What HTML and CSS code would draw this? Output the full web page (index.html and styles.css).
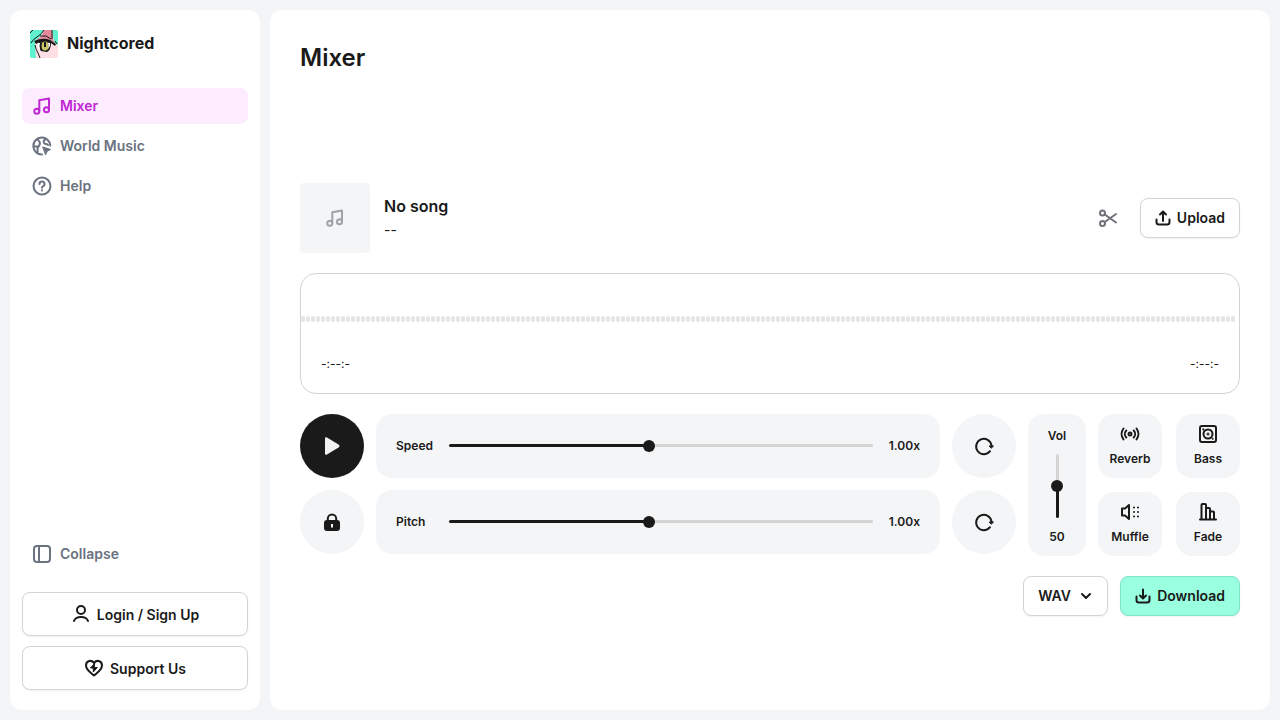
FILE: index.html
```
<!DOCTYPE html>
<html lang="en">
<head>
<meta charset="UTF-8">
<meta name="viewport" content="width=device-width, initial-scale=1.0">
<title>Nightcored</title>
<link rel="stylesheet" href="styles.css">
</head>
<body>
<div class="app">
    <aside class="sidebar">
        <a class="brand" href="#">
            <svg class="brand-logo" viewBox="0 0 28 28" aria-hidden="true">
                <rect width="28" height="28" fill="#ffdfe3"/>
                <path d="M0 0h14L10 7 5 11l1 17H0z" fill="#5ff0cf"/>
                <path d="M14 0h8l1 9 2 4-12-4-7 1 6-4z" fill="#e2899a"/>
                <path d="M22 0h6v15l-4-3z" fill="#5ff0cf"/>
                <path d="M0 3l3-3M14 0q-2 4-7 7-4 2-6 6M10 6l6 0 5 3M22 0v9M5 15q1 5 3 8l2 5M25 11l2 3" fill="none" stroke="#171717" stroke-width="1"/>
                <path d="M4 11q9-4 16-1l6 4-1 2-4-3-11-1-4 2z" fill="#171717"/>
                <path d="M9 12q-1 5 2 9l6 1q4-2 4-9z" fill="#171717"/>
                <path d="M8 13q-1 4 1 6l1 1q-1-4 0-7z" fill="#fff"/>
                <ellipse cx="15" cy="16" rx="3.500" ry="4.500" fill="#c9c568"/>
                <path d="M14 12h2v5h-2z" fill="#171717"/>
                <path d="M18 13q1 3 0 6l2-3v-3z" fill="#fff"/>
            </svg>
            <span class="brand-name">Nightcored</span>
        </a>
        <nav class="menu">
            <a class="menu-item active" href="#">
                <svg class="icon" viewBox="0 0 20 20"><circle cx="4.800" cy="15.200" r="2.500"/><circle cx="14.500" cy="13.800" r="2.500"/><path d="M7.300 15V4.200L17 2.500v11.300"/></svg>
                Mixer
            </a>
            <a class="menu-item" href="#">
                <svg class="icon" viewBox="0 0 20 20"><path d="M18.300 9.500A8.500 8.500 0 1 0 10 18.500"/><path d="M5.500 3.500C8 5.500 8.500 7 7.500 9s-2 2-2 3.500.5 3 0 4M2 10.500h3M14 3c-2 1-3 2.500-2 4s3 .5 4 2"/><path class="solid" d="M11 11l7.500 2.500-3.300 1.700-1.500 3.300z"/></svg>
                World Music
            </a>
            <a class="menu-item" href="#">
                <svg class="icon" viewBox="0 0 20 20"><circle cx="10" cy="10" r="8.500"/><path d="M7.500 8a2.500 2.500 0 1 1 3.700 2.200q-1.200.6-1.200 1.600M10 14.300v.1"/></svg>
                Help
            </a>
        </nav>
        <div class="sidebar-bottom">
            <button class="menu-item" type="button">
                <svg class="icon" viewBox="0 0 20 20"><rect x="2" y="2" width="16" height="16" rx="3"/><path d="M7 2v16"/></svg>
                Collapse
            </button>
            <button class="btn btn-large" type="button">
                <svg class="icon" viewBox="0 0 20 20"><circle cx="10" cy="6" r="4"/><path d="M3 17c1-3 4-4 7-4s6 1 7 4"/></svg>
                Login / Sign Up
            </button>
            <button class="btn btn-large" type="button">
                <svg class="icon" viewBox="0 0 20 20"><path d="M10 17.500C7 15 2 12 2 7.500 2 2.500 8 1.500 10 5c2-3.500 8-2.500 8 2.500 0 4.500-5 7.500-8 10z"/><path class="solid" d="M10.500 5.500l-4 4.500h2.800v4l4-4.500h-2.800z"/></svg>
                Support Us
            </button>
        </div>
    </aside>

    <main class="main">
        <h1>Mixer</h1>
        <div class="mixer">
            <section class="song">
                <div class="cover">
                    <svg class="icon" viewBox="0 0 20 20"><circle cx="4.800" cy="15.200" r="2.500"/><circle cx="14.500" cy="13.800" r="2.500"/><path d="M7.300 15V4.200L17 2.500v11.300"/></svg>
                </div>
                <div class="song-info">
                    <h2>No song</h2>
                    <p>--</p>
                </div>
                <button class="trim" type="button" aria-label="Trim">
                    <svg class="icon" viewBox="0 0 20 20"><circle cx="4.500" cy="5" r="2.500"/><circle cx="4.500" cy="15.500" r="2.500"/><path d="M6.800 6.500L18 14.500M6.800 14L18 6"/></svg>
                </button>
                <button class="btn" type="button">
                    <svg class="icon small" viewBox="0 0 16 16"><path d="M1.500 9.500V12q0 2.500 2.500 2.500h8q2.500 0 2.500-2.500V9.500M8 11V2M5 4.500L8 1.500l3 3"/></svg>
                    Upload
                </button>
            </section>

            <section class="wave">
                <svg class="wave-bars" width="100%" height="70" aria-hidden="true">
                    <defs>
                        <pattern id="bars" width="5" height="70" patternUnits="userSpaceOnUse">
                            <rect x="0" y="32" width="4" height="6" rx="2"/>
                        </pattern>
                    </defs>
                    <rect width="100%" height="70" fill="url(#bars)"/>
                </svg>
                <div class="times"><span>-:--:-</span><span>-:--:-</span></div>
            </section>

            <section class="controls">
                <div class="rows">
                    <button class="round play" type="button" aria-label="Play">
                        <svg viewBox="0 0 20 20" width="20" height="20"><path d="M3 2.500q0-2 2-1L16.500 8.500q2 1.500 0 3L5 18.500q-2 1-2-1z" fill="#f1f1f1"/></svg>
                    </button>
                    <div class="panel">
                        <label for="speed">Speed</label>
                        <input class="slider" id="speed" type="range" min="0.5" max="1.56" step="0.01" value="1">
                        <output for="speed">1.00x</output>
                    </div>
                    <button class="round" type="button" aria-label="Reset speed">
                        <svg class="icon" viewBox="0 0 20 20"><path d="M16 15.200A7.700 7.700 0 1 1 17.500 9.500"/><path class="solid" d="M15.500 10h4l-2 2z"/></svg>
                    </button>
                    <button class="round" type="button" aria-label="Lock pitch">
                        <svg viewBox="0 0 20 20" width="20" height="20"><path d="M5.800 9V6.800a4.200 4.200 0 0 1 8.400 0V9" fill="none" stroke="#1a1a1a" stroke-width="2"/><path d="M5 8h10q3 0 3 3v5q0 3-3 3H5q-3 0-3-3v-5q0-3 3-3zM9 12v3.500h2V12z" fill="#1a1a1a" fill-rule="evenodd"/></svg>
                    </button>
                    <div class="panel">
                        <label for="pitch">Pitch</label>
                        <input class="slider" id="pitch" type="range" min="0.5" max="1.56" step="0.01" value="1">
                        <output for="pitch">1.00x</output>
                    </div>
                    <button class="round" type="button" aria-label="Reset pitch">
                        <svg class="icon" viewBox="0 0 20 20"><path d="M16 15.200A7.700 7.700 0 1 1 17.500 9.500"/><path class="solid" d="M15.500 10h4l-2 2z"/></svg>
                    </button>
                </div>
                <div class="volume">
                    <label for="vol">Vol</label>
                    <input class="slider vertical" id="vol" type="range" min="0" max="100" value="50">
                    <output for="vol">50</output>
                </div>
                <div class="effects">
                    <button class="effect" type="button">
                        <svg class="icon" viewBox="0 0 20 20"><circle cx="10" cy="10" r="1.500"/><path d="M6.300 6.500a5 5 0 0 0 0 7M13.700 6.500a5 5 0 0 1 0 7M3.500 4.500a9 9 0 0 0 0 11M16.500 4.500a9 9 0 0 1 0 11"/></svg>
                        Reverb
                    </button>
                    <button class="effect" type="button">
                        <svg class="icon" viewBox="0 0 20 20"><rect x="2" y="2" width="16" height="16" rx="2"/><circle cx="10" cy="10" r="4.500"/><circle cx="10" cy="10" r=".5"/><path d="M5.300 5.300v.1M14.700 14.700v.1"/></svg>
                        Bass
                    </button>
                    <button class="effect" type="button">
                        <svg class="icon" viewBox="0 0 20 20"><path d="M2 6.500h3L9 3v14l-4-3.500H2z"/><path class="dots" d="M14 5.500v.1M14 10v.1M14 14.500v.1M18 5.500v.1M18 10v.1M18 14.500v.1"/></svg>
                        Muffle
                    </button>
                    <button class="effect" type="button">
                        <svg class="icon" viewBox="0 0 20 20"><path d="M2 17.500h16M3.500 17V3q0-1 1-1H7q1 0 1 1v14M8 6h3q1 0 1 1v10M12 9.500h3q1 0 1 1V17"/></svg>
                        Fade
                    </button>
                </div>
            </section>

            <section class="export">
                <div class="format">
                    <select class="btn" aria-label="Format">
                        <option>WAV</option>
                        <option>MP3</option>
                    </select>
                    <svg class="icon chevron" viewBox="0 0 12 12"><path d="M2 4l4 4 4-4"/></svg>
                </div>
                <button class="btn download" type="button">
                    <svg class="icon small" viewBox="0 0 16 16"><path d="M1.500 8.500V12q0 2.500 2.500 2.500h8q2.500 0 2.500-2.500V8.500M8 1.500V10M5 7.500l3 3 3-3"/></svg>
                    Download
                </button>
            </section>
        </div>
    </main>
</div>
<script>
    document.querySelectorAll('.slider').forEach(function (slider) {
        function update() {
            const percent = (slider.value - slider.min) / (slider.max - slider.min) * 100
            slider.style.setProperty('--fill', percent + '%')
            slider.nextElementSibling.textContent = slider.id === 'vol' ? slider.value : Number(slider.value).toFixed(2) + 'x'
        }
        slider.addEventListener('input', update)
        update()
    })
</script>
</body>
</html>
```
FILE: styles.css
```
* {
    box-sizing: border-box;
}

body {
    margin: 0;
    background-color: #f3f5f6;
    color: #1a1a1a;
    font-family: Inter, sans-serif;
    font-size: 14px;
}

button, select {
    font: inherit;
    color: inherit;
    cursor: pointer;
}

h1, h2, p {
    margin: 0;
}

.app {
    display: flex;
    gap: 10px;
    min-height: 100vh;
    padding: 10px;
}

.icon {
    width: 20px;
    height: 20px;
    flex: none;
    fill: none;
    stroke: currentColor;
    stroke-width: 2;
    stroke-linecap: round;
    stroke-linejoin: round;
}

.icon.small {
    width: 16px;
    height: 16px;
}

.icon .solid {
    fill: currentColor;
    stroke-width: 1;
}

/* Sidebar */

.sidebar {
    display: flex;
    flex-direction: column;
    width: 250px;
    flex: none;
    padding: 20px 12px;
    background-color: white;
    border-radius: 12px;
}

.brand {
    display: flex;
    gap: 9px;
    padding: 0 8px;
    color: inherit;
    text-decoration: none;
}

.brand-logo {
    width: 28px;
    height: 28px;
    border-radius: 2px;
}

.brand-name {
    font-size: 16px;
    font-weight: 700;
    line-height: 26px;
}

.menu {
    display: flex;
    flex-direction: column;
    gap: 4px;
    margin-top: 30px;
}

.menu-item {
    display: flex;
    align-items: center;
    gap: 8px;
    height: 36px;
    padding: 0 10px;
    border: none;
    border-radius: 8px;
    background: none;
    color: #6b7280;
    font-size: 14px;
    font-weight: 600;
    line-height: 18px;
    text-decoration: none;
}

.menu-item.active {
    background-color: #fdebff;
    color: #c026d3;
}

.sidebar-bottom {
    display: flex;
    flex-direction: column;
    gap: 10px;
    margin-top: auto;
}

.sidebar-bottom .menu-item {
    margin-bottom: 10px;
}

.btn {
    display: flex;
    align-items: center;
    justify-content: center;
    gap: 6px;
    height: 40px;
    padding: 0 14px;
    border: 1px solid #d4d4d4;
    border-radius: 8px;
    background-color: white;
    font-weight: 600;
    box-shadow: 0 1px 2px rgba(0, 0, 0, 0.05);
}

.btn-large {
    height: 44px;
}

/* Main */

.main {
    display: flex;
    flex-direction: column;
    flex: 1;
    min-width: 0;
    padding: 30px 30px 0;
    background-color: white;
    border-radius: 12px;
}

h1 {
    font-size: 24px;
    font-weight: 600;
    line-height: 36px;
}

.mixer {
    display: flex;
    flex-direction: column;
    gap: 20px;
    margin: auto 0;
    padding-top: 12px;
}

.song {
    display: flex;
    align-items: center;
}

.cover {
    display: flex;
    align-items: center;
    justify-content: center;
    width: 70px;
    height: 70px;
    border-radius: 4px;
    background-color: #f3f5f6;
    color: #a1a1aa;
}

.song-info {
    flex: 1;
    margin-left: 14px;
    line-height: 24px;
}

h2 {
    font-size: 16px;
    font-weight: 600;
}

.trim {
    display: flex;
    margin-right: 22px;
    padding: 0;
    border: none;
    background: none;
    color: #71717a;
}

.wave {
    padding: 10px 0 19px;
    border: 1px solid #d4d4d4;
    border-radius: 16px;
}

.wave-bars {
    display: block;
    padding-right: 3px;
    fill: #e5e5e5;
}

.times {
    display: flex;
    justify-content: space-between;
    padding: 0 20px;
    font-size: 12px;
    line-height: 20px;
}

.controls {
    display: flex;
    align-items: flex-start;
    gap: 12px;
    font-size: 12px;
    font-weight: 600;
}

.rows {
    display: grid;
    grid-template-columns: 64px 1fr 64px;
    gap: 12px;
    flex: 1;
}

.round {
    display: flex;
    align-items: center;
    justify-content: center;
    width: 64px;
    height: 64px;
    padding: 0;
    border: none;
    border-radius: 50%;
    background-color: #f3f5f6;
}

.play {
    background-color: #1a1a1a;
}

.panel {
    display: flex;
    align-items: center;
    height: 64px;
    padding: 0 20px;
    border-radius: 16px;
    background-color: #f3f5f6;
}

.panel label {
    width: 53px;
}

.panel output {
    width: 47px;
    text-align: right;
}

/* Range inputs, --fill is set from the value */

.slider {
    --direction: to right;
    appearance: none;
    flex: 1;
    min-width: 0;
    height: 3px;
    margin: 0;
    border-radius: 2px;
    background: linear-gradient(var(--direction), #1a1a1a var(--fill), #d4d4d4 var(--fill));
    cursor: pointer;
}

.slider::-webkit-slider-thumb {
    appearance: none;
    width: 12px;
    height: 12px;
    border-radius: 50%;
    background-color: #1a1a1a;
}

.slider.vertical {
    --direction: to top;
    writing-mode: vertical-lr;
    direction: rtl;
    flex: none;
    width: 3px;
    height: 64px;
}

.volume {
    display: flex;
    flex-direction: column;
    align-items: center;
    justify-content: space-between;
    width: 58px;
    height: 142px;
    padding: 13px 0 10px;
    border-radius: 16px;
    background-color: #f3f5f6;
    line-height: 18px;
}

.effects {
    display: grid;
    grid-template-columns: 64px 64px;
    gap: 14px;
}

.effect {
    display: flex;
    flex-direction: column;
    align-items: center;
    gap: 6px;
    height: 64px;
    padding: 10px 0;
    border: none;
    border-radius: 16px;
    background-color: #f3f5f6;
    line-height: 18px;
}

.export {
    display: flex;
    justify-content: flex-end;
    gap: 12px;
}

.format {
    position: relative;
}

.format select {
    appearance: none;
    width: 85px;
}

.chevron {
    position: absolute;
    top: 14px;
    right: 16px;
    width: 12px;
    height: 12px;
    pointer-events: none;
}

.download {
    border-color: #7fe5c6;
    background-color: #99ffdf;
}
```
